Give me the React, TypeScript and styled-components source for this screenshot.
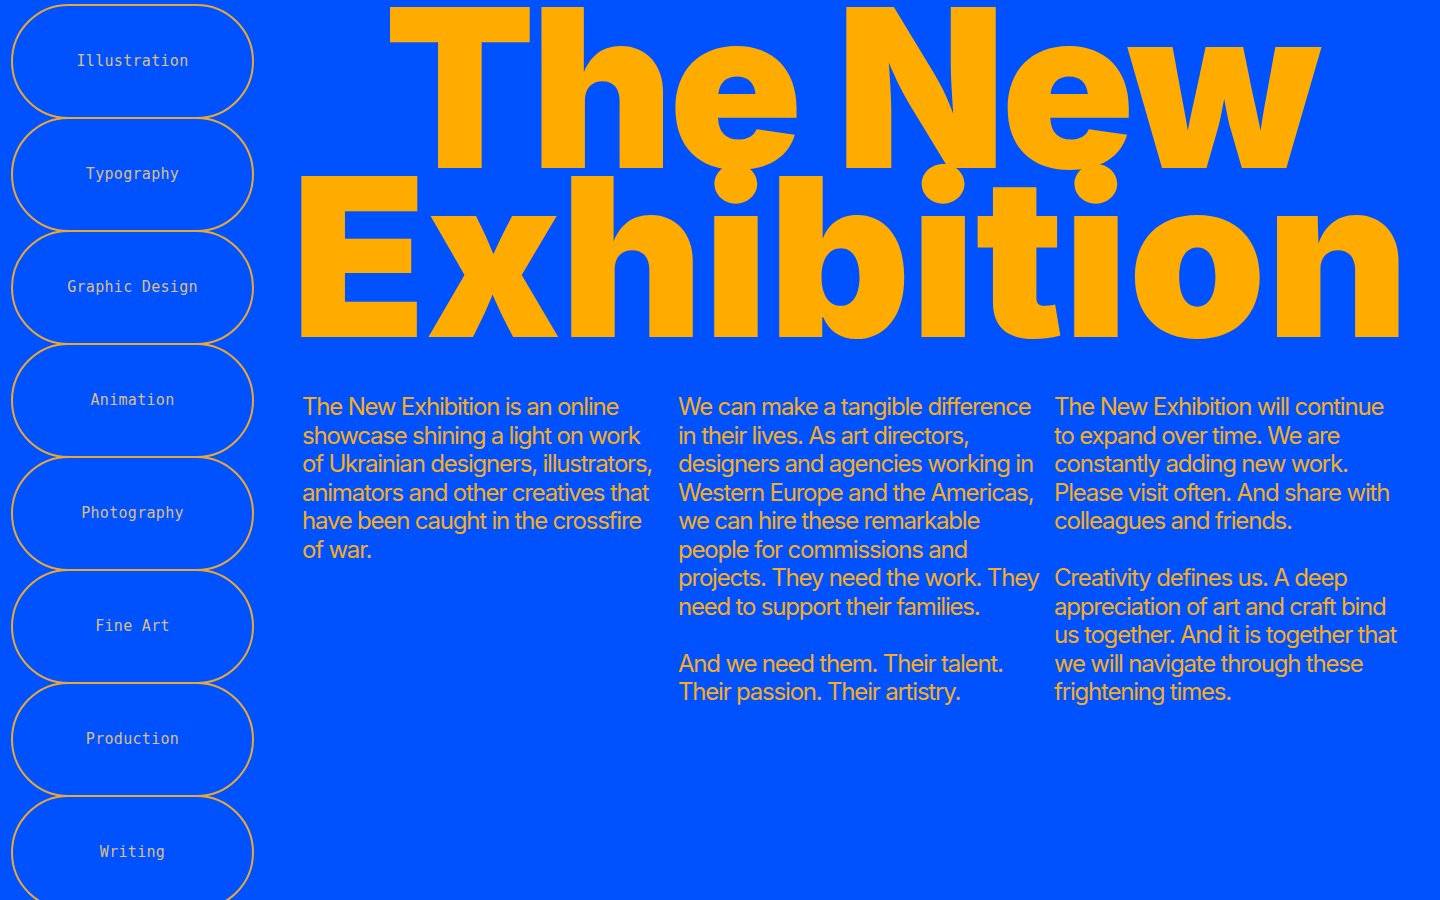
import React from 'react';
import styled, { createGlobalStyle } from 'styled-components';

const GlobalStyle = createGlobalStyle`
  html, body {
    margin: 0;
    padding: 0;
    background: #0052ff;
  }
  body {
    overflow: hidden;
  }
  * {
    box-sizing: border-box;
  }
`;

const Page = styled.div`
  display: flex;
  align-items: flex-start;
  gap: 46px;
  width: 1440px;
  height: 900px;
  padding: 4px 30px 0 11px;
  background: #0052ff;
  overflow: hidden;
`;

const Sidebar = styled.nav`
  display: flex;
  flex-direction: column;
  flex: 0 0 243px;
`;

const Pill = styled.a`
  display: flex;
  align-items: center;
  justify-content: center;
  height: 115px;
  flex: 0 0 auto;
  border: 2px solid #eaa733;
  border-radius: 58px;
  margin-bottom: -2px;
  font-family: 'DejaVu Sans Mono', 'Liberation Mono', monospace;
  font-size: 15px;
  letter-spacing: 0.3px;
  color: #dcbf82;
  text-decoration: none;
  cursor: pointer;
  padding-bottom: 2px;
`;

const Main = styled.main`
  display: flex;
  flex-direction: column;
  flex: 1;
  min-width: 0;
`;

const Headline = styled.h1`
  display: flex;
  flex-direction: column;
  align-items: center;
  margin: -1px 10px 0 0;
  font-family: Inter, 'Liberation Sans', sans-serif;
  font-weight: 900;
  font-size: 221px;
  line-height: 169px;
  color: #ffab00;
  white-space: nowrap;
`;

const HeadLine = styled.span<{ $tracking: number }>`
  display: block;
  letter-spacing: ${(p) => p.$tracking}em;
`;

const Columns = styled.section`
  display: grid;
  grid-template-columns: repeat(3, 356px);
  column-gap: 20px;
  margin-top: 52px;
  padding-left: 2px;
`;

const Column = styled.div`
  display: flex;
  flex-direction: column;
  gap: 28.5px;
`;

const Para = styled.p`
  margin: 0;
  font-family: Inter, 'Liberation Sans', sans-serif;
  font-weight: 400;
  font-size: 24px;
  line-height: 28.5px;
  letter-spacing: -0.05em;
  color: #f7ad1c;
`;

const Line = styled.span`
  display: block;
  white-space: nowrap;
`;

const categories = [
  'Illustration',
  'Typography',
  'Graphic Design',
  'Animation',
  'Photography',
  'Fine Art',
  'Production',
  'Writing',
];

const columns: string[][][] = [
  [
    [
      'The New Exhibition is an online',
      'showcase shining a light on work',
      'of Ukrainian designers, illustrators,',
      'animators and other creatives that',
      'have been caught in the crossfire',
      'of war.',
    ],
  ],
  [
    [
      'We can make a tangible difference',
      'in their lives. As art directors,',
      'designers and agencies working in',
      'Western Europe and the Americas,',
      'we can hire these remarkable',
      'people for commissions and',
      'projects. They need the work. They',
      'need to support their families.',
    ],
    ['And we need them. Their talent.', 'Their passion. Their artistry.'],
  ],
  [
    [
      'The New Exhibition will continue',
      'to expand over time. We are',
      'constantly adding new work.',
      'Please visit often. And share with',
      'colleagues and friends.',
    ],
    [
      'Creativity defines us. A deep',
      'appreciation of art and craft bind',
      'us together. And it is together that',
      'we will navigate through these',
      'frightening times.',
    ],
  ],
];

export default function App() {
  return (
    <>
      <GlobalStyle />
      <Page>
        <Sidebar>
          {categories.map((c) => (
            <Pill key={c}>{c}</Pill>
          ))}
        </Sidebar>
        <Main>
          <Headline>
            <HeadLine $tracking={-0.024}>The New</HeadLine>
            <HeadLine $tracking={-0.002}>Exhibition</HeadLine>
          </Headline>
          <Columns>
            {columns.map((paras, i) => (
              <Column key={i}>
                {paras.map((lines, j) => (
                  <Para key={j}>
                    {lines.map((l) => (
                      <Line key={l}>{l}</Line>
                    ))}
                  </Para>
                ))}
              </Column>
            ))}
          </Columns>
        </Main>
      </Page>
    </>
  );
}
